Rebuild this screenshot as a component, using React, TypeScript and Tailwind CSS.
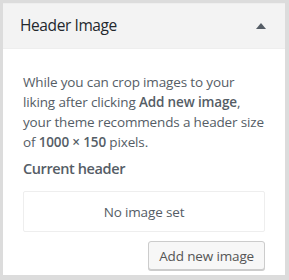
export default function App() {
  return (
    <div className="w-[289px] h-[280px] bg-[#dcdcdc] pt-[3px] pl-[3px]" style={{ fontFamily: '"Open Sans", sans-serif' }}>
      <div className="w-[282px] h-[272px] bg-white border-t border-[#eeeeee] flex flex-col">
        <div className="h-[45px] bg-[#f3f3f3] border-b border-[#eeeeee] flex items-center justify-between pl-[17px] pr-[19px] pb-[1px]">
          <span className="text-[15.5px] tracking-[-0.4px] text-[#23282d] leading-none">Header Image</span>
          <svg width="10" height="6" viewBox="0 0 10 6"><path d="M0 6 L5 0 L10 6 Z" fill="#555d66" /></svg>
        </div>
        <div className="pl-[20px] pr-[20px] pt-[23px] text-[13.5px] tracking-[-0.15px] leading-[20px] text-[#555d66]">
          <p className="whitespace-nowrap">
            While you can crop images to your<br />
            liking after clicking <b className="font-semibold">Add new image</b>,<br />
            your theme recommends a header size<br />
            of <b className="font-semibold">1000 × 150</b> pixels.
          </p>
          <div className="mt-[7px] text-[14.5px] tracking-[-0.4px] font-semibold leading-[20px]">Current header</div>
          <div className="mt-[12px] h-[41px] border border-[#eeeeee] rounded-[2px] flex items-center justify-center text-[13.5px]">No image set</div>
          <div className="mt-[9px] flex justify-end">
            <button className="h-[29px] px-[10px] border border-[#cccccc] bg-[#f7f7f7] rounded-[3px] text-[13.5px] tracking-[-0.15px] text-[#555] shadow-[0_1px_0_#ccc]">Add new image</button>
          </div>
        </div>
      </div>
    </div>
  );
}
